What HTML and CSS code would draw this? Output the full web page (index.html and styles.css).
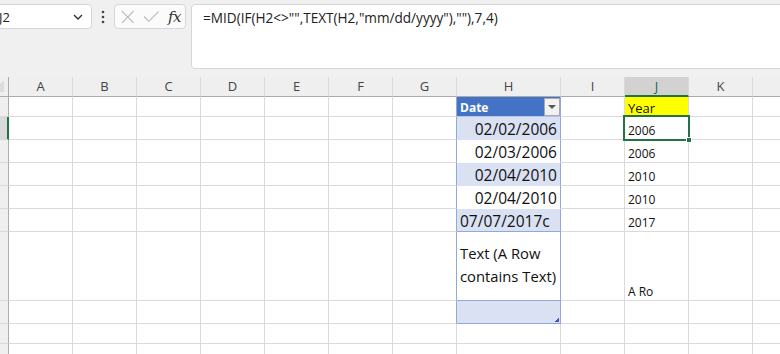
FILE: index.html
```html
<!DOCTYPE html>
<html>
<head>
<meta charset="utf-8">
<link rel="stylesheet" href="styles.css">
</head>
<body>
<div class="toolbar">
  <div class="namebox">
    <span class="nb-text">J2</span>
    <svg class="chev" width="10" height="6" viewBox="0 0 10 6"><path d="M1 1 L5 5 L9 1" fill="none" stroke="#333" stroke-width="1.4"/></svg>
  </div>
  <div class="dots">
    <svg width="4" height="14" viewBox="0 0 4 14"><circle cx="2" cy="2" r="1.3" fill="#444"/><circle cx="2" cy="7" r="1.3" fill="#444"/><circle cx="2" cy="12" r="1.3" fill="#444"/></svg>
  </div>
  <div class="fxbox">
    <svg width="14" height="14" viewBox="0 0 14 14"><path d="M1 1 L13 13 M13 1 L1 13" stroke="#b5b5b5" stroke-width="1.1" fill="none"/></svg>
    <svg width="17" height="13" viewBox="0 0 17 13"><path d="M1 6.5 L6 11.5 L16 1.5" stroke="#b5b5b5" stroke-width="1.1" fill="none"/></svg>
    <span class="fx">fx</span>
  </div>
  <div class="formula">=MID(IF(H2&lt;&gt;"",TEXT(H2,"mm/dd/yyyy"),""),7,4)</div>
</div>

<div class="sheet">
  <!-- header row -->
  <div class="corner"><span class="tri"></span></div>
  <div class="ch">A</div><div class="ch">B</div><div class="ch">C</div><div class="ch">D</div><div class="ch">E</div><div class="ch">F</div><div class="ch">G</div><div class="ch">H</div><div class="ch">I</div><div class="ch sel">J</div><div class="ch">K</div><div class="ch"></div>

  <!-- row 1 -->
  <div class="rh"></div>
  <div class="c"></div><div class="c"></div><div class="c"></div><div class="c"></div><div class="c"></div><div class="c"></div><div class="c tl"></div>
  <div class="c hh"><span>Date</span><span class="filter"><svg width="8" height="4" viewBox="0 0 8 4"><path d="M0 0 H8 L4 4 Z" fill="#595959"/></svg></span></div>
  <div class="c"></div>
  <div class="c yel">Year</div>
  <div class="c"></div><div class="c"></div>

  <!-- row 2 -->
  <div class="rh rsel"></div>
  <div class="c"></div><div class="c"></div><div class="c"></div><div class="c"></div><div class="c"></div><div class="c"></div><div class="c tl"></div>
  <div class="c hd band first">02/02/2006</div>
  <div class="c"></div>
  <div class="c yr active">2006<span class="selbox"></span><span class="handle"></span></div>
  <div class="c"></div><div class="c"></div>

  <!-- row 3 -->
  <div class="rh"></div>
  <div class="c"></div><div class="c"></div><div class="c"></div><div class="c"></div><div class="c"></div><div class="c"></div><div class="c tl"></div>
  <div class="c hd plain">02/03/2006</div>
  <div class="c"></div>
  <div class="c yr">2006</div>
  <div class="c"></div><div class="c"></div>

  <!-- row 4 -->
  <div class="rh"></div>
  <div class="c"></div><div class="c"></div><div class="c"></div><div class="c"></div><div class="c"></div><div class="c"></div><div class="c tl"></div>
  <div class="c hd band">02/04/2010</div>
  <div class="c"></div>
  <div class="c yr">2010</div>
  <div class="c"></div><div class="c"></div>

  <!-- row 5 -->
  <div class="rh"></div>
  <div class="c"></div><div class="c"></div><div class="c"></div><div class="c"></div><div class="c"></div><div class="c"></div><div class="c tl"></div>
  <div class="c hd plain">02/04/2010</div>
  <div class="c"></div>
  <div class="c yr">2010</div>
  <div class="c"></div><div class="c"></div>

  <!-- row 6 -->
  <div class="rh"></div>
  <div class="c"></div><div class="c"></div><div class="c"></div><div class="c"></div><div class="c"></div><div class="c"></div><div class="c tl"></div>
  <div class="c hd band left blue-b">07/07/2017c</div>
  <div class="c"></div>
  <div class="c yr">2017</div>
  <div class="c"></div><div class="c"></div>

  <!-- row 7 -->
  <div class="rh"></div>
  <div class="c"></div><div class="c"></div><div class="c"></div><div class="c"></div><div class="c"></div><div class="c"></div><div class="c tl"></div>
  <div class="c wrap blue-b">Text (A Row contains Text)</div>
  <div class="c"></div>
  <div class="c yr">A Ro</div>
  <div class="c"></div><div class="c"></div>

  <!-- row 8 -->
  <div class="rh"></div>
  <div class="c"></div><div class="c"></div><div class="c"></div><div class="c"></div><div class="c"></div><div class="c"></div><div class="c tl"></div>
  <div class="c hd band blue-b last"><span class="resize"></span></div>
  <div class="c"></div>
  <div class="c"></div>
  <div class="c"></div><div class="c"></div>

  <!-- row 9 -->
  <div class="rh"></div>
  <div class="c"></div><div class="c"></div><div class="c"></div><div class="c"></div><div class="c"></div><div class="c"></div><div class="c"></div><div class="c"></div><div class="c"></div><div class="c"></div><div class="c"></div><div class="c"></div>

  <!-- row 10 -->
  <div class="rh"></div>
  <div class="c"></div><div class="c"></div><div class="c"></div><div class="c"></div><div class="c"></div><div class="c"></div><div class="c"></div><div class="c"></div><div class="c"></div><div class="c"></div><div class="c"></div><div class="c"></div>
</div>
</body>
</html>
```

FILE: styles.css
```css
* { box-sizing: border-box; }
html, body {
  margin: 0;
  padding: 0;
  width: 780px;
  height: 354px;
  overflow: hidden;
  background: #ffffff;
  font-family: "Open Sans", "Noto Sans", sans-serif;
}

.toolbar {
  height: 77px;
  background: #f0f0f0;
  display: flex;
  align-items: flex-start;
  padding-top: 4px;
  margin-left: -8px;
  width: 800px;
}

.namebox {
  width: 100px;
  height: 25px;
  background: #fff;
  border: 1px solid #d6d6d6;
  border-radius: 4px;
  display: flex;
  align-items: center;
  justify-content: space-between;
  padding: 0 8px 0 6px;
  font-size: 13px;
  color: #222;
}
.nb-text { line-height: 18px; }
.chev { margin-top: 1px; }

.dots {
  width: 22px;
  height: 25px;
  display: flex;
  align-items: center;
  justify-content: center;
}

.fxbox {
  width: 72px;
  height: 25px;
  background: #fbfbfb;
  border: 1px solid #d6d6d6;
  border-radius: 4px;
  display: flex;
  align-items: center;
  padding: 0 4px 0 6px;
  gap: 8px;
}
.fx {
  font-family: "DejaVu Serif", "Liberation Serif", serif;
  font-style: italic;
  font-size: 15px;
  color: #333;
  margin-left: 1px;
  letter-spacing: -0.5px;
}

.formula {
  margin-left: 5px;
  flex: 1;
  height: 65px;
  background: #fff;
  border: 1px solid #d6d6d6;
  border-radius: 4px;
  padding: 4px 11px;
  font-size: 13.6px;
  line-height: 18px;
  color: #222;
  white-space: nowrap;
}

.sheet {
  display: grid;
  grid-template-columns: 9px repeat(7, 64px) 104px 64px 64px 64px 64px;
  grid-template-rows: 20px 20px 23px 23px 23px 23px 23px 69px 23px 20px 23px;
}

.corner {
  background: #efefef;
  border-right: 1px solid #ababab;
  border-bottom: 1px solid #ababab;
  position: relative;
  overflow: hidden;
}
.tri {
  position: absolute;
  right: 4px;
  bottom: 4px;
  width: 0;
  height: 0;
  border-left: 12px solid transparent;
  border-bottom: 12px solid #dcdcdc;
}

.ch {
  background: #efefef;
  border-right: 1px solid #dadada;
  border-bottom: 1px solid #ababab;
  font-size: 13px;
  color: #444;
  text-align: center;
  line-height: 19px;
}
.ch.sel {
  background: #d2d2d2;
  color: #1e6b41;
  border-bottom: 2px solid #217346;
}

.rh {
  background: #efefef;
  border-right: 1px solid #ababab;
  border-bottom: 1px solid #dadada;
}
.rh.rsel {
  background: #d9d9d9;
  border-right: 2px solid #217346;
}

.c {
  border-right: 1px solid #dadada;
  border-bottom: 1px solid #dadada;
  display: flex;
  align-items: flex-end;
  padding: 0 3px;
  font-size: 12px;
  line-height: 16px;
  color: #111;
  white-space: nowrap;
  overflow: visible;
}
.c.tl { border-right-color: #8ea9db; }

.hh {
  background: #4472c4;
  color: #fff;
  font-weight: bold;
  border-right-color: #8ea9db;
  border-bottom-color: #b4c6e7;
  justify-content: space-between;
  align-items: center;
  padding: 0 0 0 3px;
  position: relative;
}
.hh span:first-child { line-height: 16px; padding-top: 2px; }
.filter {
  width: 16px;
  height: 18px;
  background: #f2f2f2;
  border: 1px solid #a9a9a9;
  display: flex;
  align-items: center;
  justify-content: center;
  margin-top: 0;
}

.hd {
  font-size: 15.5px;
  line-height: 20px;
  justify-content: flex-end;
  border-right-color: #8ea9db;
  color: #111;
  padding: 0 3px 0 3px;
}
.hd.band { background: #d9e1f2; border-bottom-color: #d9e1f2; }
.hd.plain { background: #fff; border-bottom-color: #fff; }
.hd.left { justify-content: flex-start; padding-left: 3px; }
.blue-b { border-bottom-color: #8ea9db !important; }
.hd.last { position: relative; }

.wrap {
  white-space: normal;
  font-size: 14.8px;
  line-height: 23px;
  align-items: center;
  border-right-color: #8ea9db;
  padding: 0 1px 2px 3px;
  color: #111;
}

.yel {
  background: #ffff00;
  font-size: 13px;
}

.yr { color: #111; }

.active { position: relative; }
.selbox {
  position: absolute;
  left: -2px;
  top: -2px;
  width: 67px;
  height: 26px;
  border: 2px solid #217346;
  pointer-events: none;
}
.handle {
  position: absolute;
  left: 61px;
  top: 20px;
  width: 6px;
  height: 6px;
  background: #217346;
  border: 1px solid #fff;
}

.resize {
  position: absolute;
  right: 1px;
  bottom: 1px;
  width: 4px;
  height: 4px;
  background: linear-gradient(135deg, transparent 50%, #4458b5 50%);
}
```
